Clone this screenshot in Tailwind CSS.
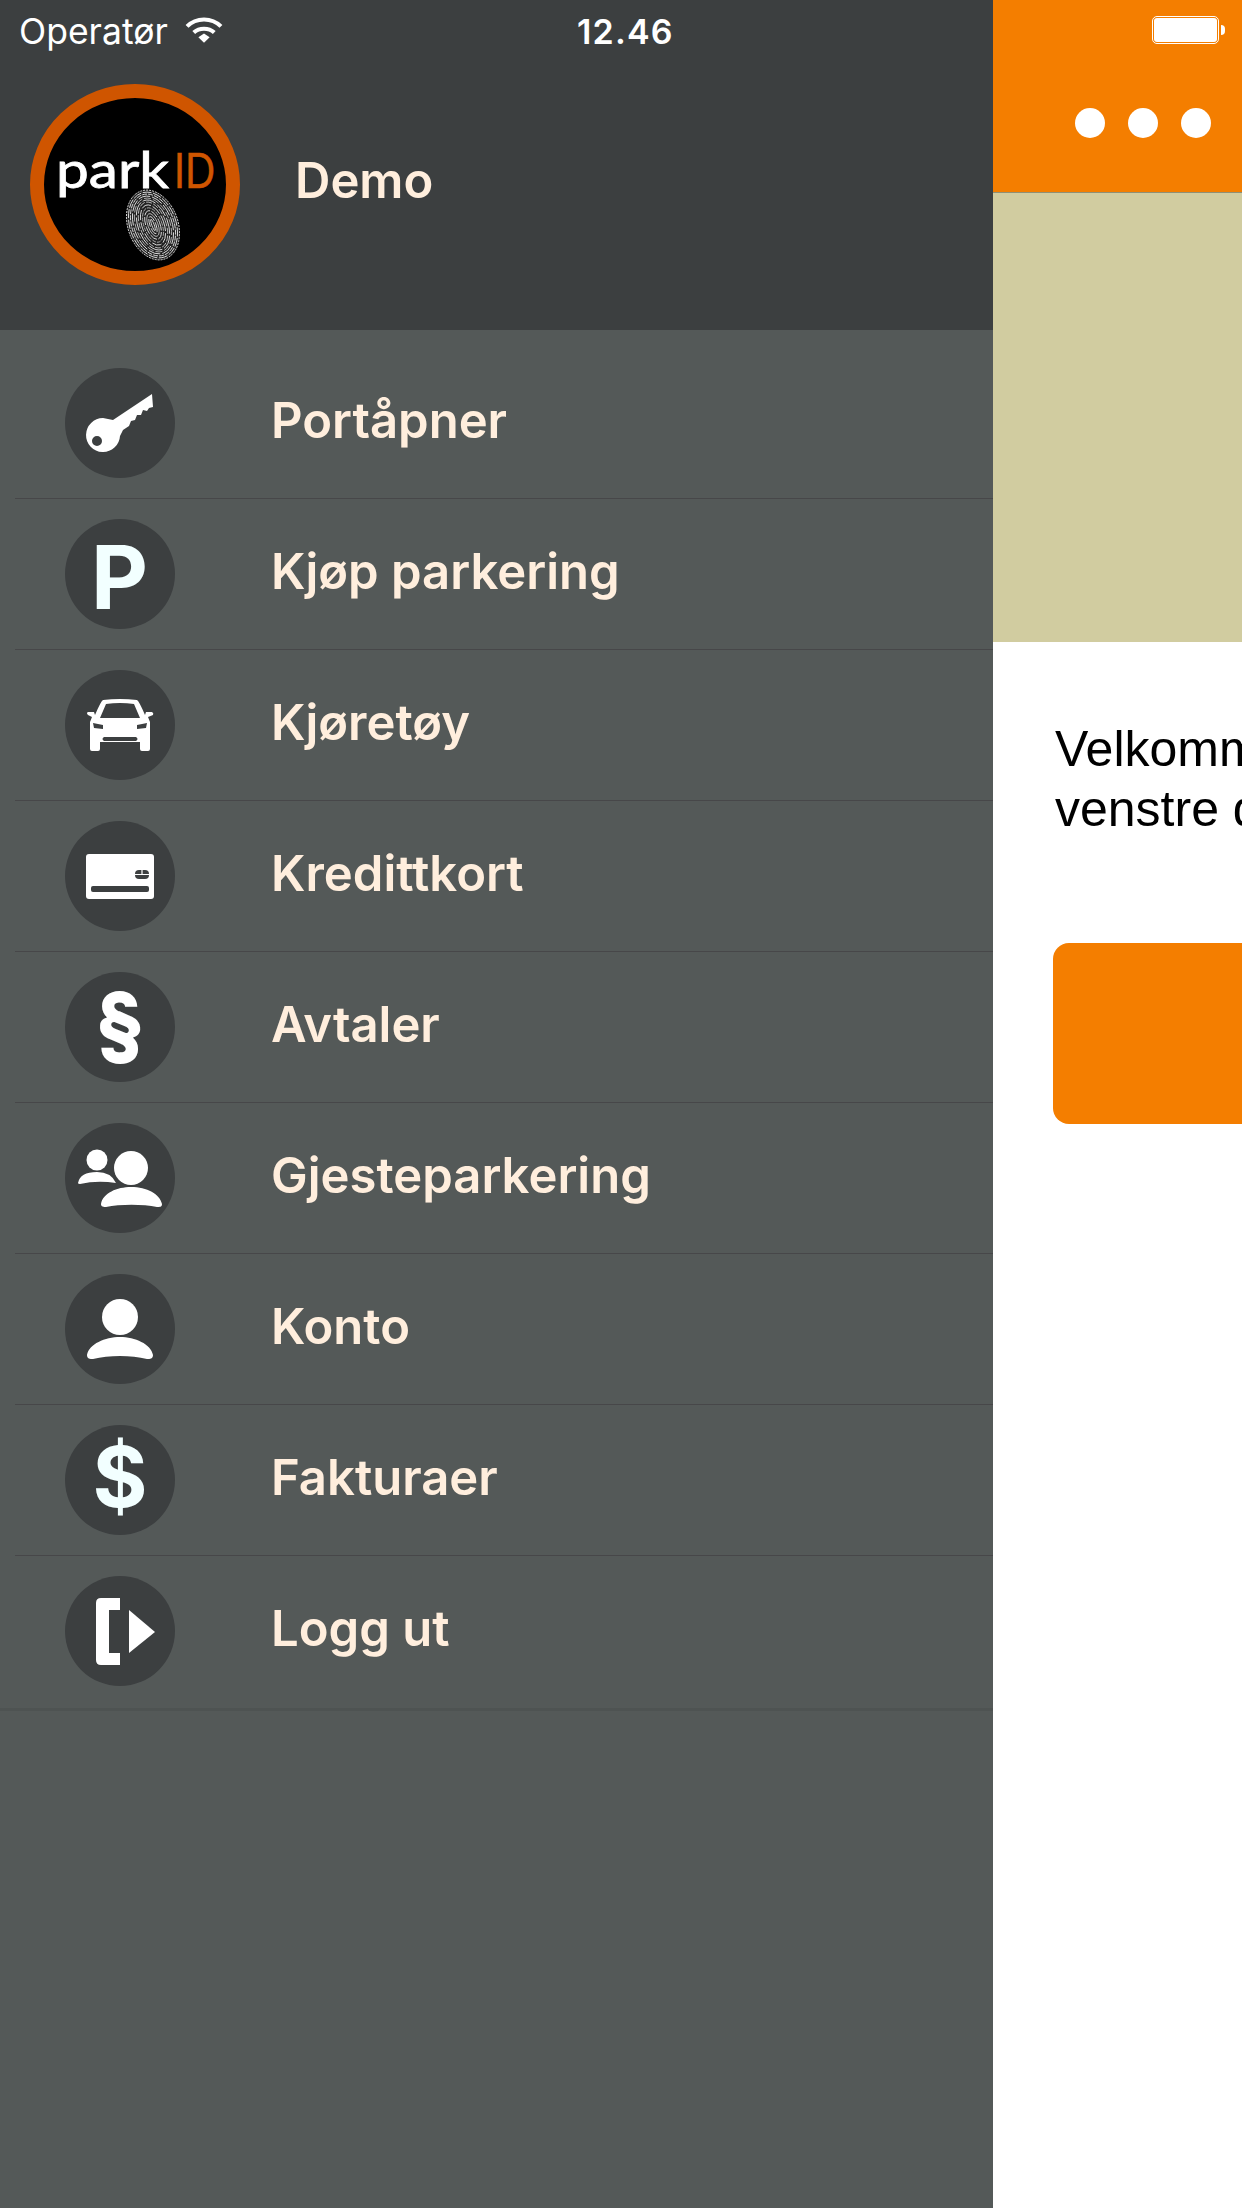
<!DOCTYPE html>
<html lang="no">
<head>
    <meta charset="UTF-8">
    <meta name="viewport" content="width=device-width, initial-scale=1.0">
    <title>parkID - Meny</title>
    <script src="https://cdn.jsdelivr.net/npm/@tailwindcss/browser@4"></script>
</head>
<body class="font-['Inter',sans-serif] bg-white">
<div class="flex w-[1242px] h-[2208px] overflow-hidden">

    <!-- Sidemeny -->
    <aside class="w-[993px] shrink-0 flex flex-col bg-[#545958]">
        <header class="h-[330px] bg-[#3c3f40] flex flex-col">
            <div class="h-[62px] flex items-center pl-[19px] pt-[1px] text-white text-[35.500px]">
                <div class="w-[558px] flex items-center gap-[17px]">
                    <span>Operatør</span>
                    <svg class="w-[38px] h-[28px] -mt-[4px]" viewBox="0 0 37 27">
                        <path d="M2 10 C11 1 26 1 35 10" fill="none" stroke="white" stroke-width="4"/>
                        <path d="M8.5 16 C14 11 23 11 28.500 16" fill="none" stroke="white" stroke-width="4"/>
                        <path d="M13 20.500 L18.500 17 L24 20.500 L18.500 26 Z" fill="white"/>
                    </svg>
                </div>
                <span class="font-semibold text-[34px] tracking-[1.200px]">12.46</span>
            </div>
            <div class="flex items-center pl-[30px] mt-[22px]">
                <svg class="w-[210px] h-[201px]" viewBox="0 0 210 201">
                    <ellipse cx="105" cy="100.500" rx="98" ry="93.500" fill="black" stroke="#cf5500" stroke-width="14"/>
                    <text x="26" y="104" font-family="Lato" font-size="50" fill="white" stroke="white" stroke-width="0.800" textLength="113" lengthAdjust="spacingAndGlyphs">park</text>
                    <text x="144" y="104" font-family="Lato" font-size="48" fill="#cf5500" stroke="#cf5500" stroke-width="0.500" textLength="41" lengthAdjust="spacingAndGlyphs">ID</text>
                    <!-- fingeravtrykk -->
                    <g transform="rotate(-20 123 141)" fill="none" stroke="#f0f0f0" stroke-width="0.800">
                        <ellipse cx="123" cy="141" rx="25" ry="36" fill="#222" stroke-dasharray="2 1"/>
                        <ellipse cx="123" cy="141" rx="23" ry="34" stroke-dasharray="9 1.500"/>
                        <ellipse cx="123" cy="141" rx="21" ry="32" stroke-dasharray="5 1"/>
                        <ellipse cx="123" cy="141" rx="19" ry="30" stroke-dasharray="12 2"/>
                        <ellipse cx="123" cy="141" rx="17" ry="28" stroke="#bbb" stroke-dasharray="7 2"/>
                        <ellipse cx="123" cy="141" rx="15" ry="26" stroke-dasharray="14 2"/>
                        <ellipse cx="123" cy="141" rx="13" ry="24" stroke="#ccc" stroke-dasharray="6 1.500"/>
                        <ellipse cx="123" cy="141" rx="11" ry="21" stroke-dasharray="10 2"/>
                        <ellipse cx="123" cy="141" rx="9" ry="18" stroke="#bbb" stroke-dasharray="4 1"/>
                        <ellipse cx="123" cy="141" rx="7" ry="15" stroke-dasharray="8 1.500"/>
                        <ellipse cx="123" cy="141" rx="5" ry="12" stroke="#ccc"/>
                        <ellipse cx="123" cy="141" rx="3" ry="9" stroke-dasharray="8 1.500"/>
                        <ellipse cx="123" cy="141" rx="1.200" ry="6"/>
                    </g>
                </svg>
                <span class="ml-[55px] -mt-[7px] text-[49px] font-semibold text-[#ffeedd]">Demo</span>
            </div>
        </header>

        <nav class="pt-[18px] text-[49px] font-semibold text-[#ffeedd]">
            <a class="flex items-center h-[151px] ml-[15px] pl-[50px] border-b border-[#474749]">
                <svg class="w-[110px] h-[110px] shrink-0" viewBox="0 0 110 110">
                    <circle cx="55" cy="55" r="55" fill="#3c3f40"/>
                    <path fill="white" fill-rule="evenodd" d="M38 50 A17 17 0 1 0 55 68 L58 62 L61 60 L64 58 L66 53 L70 52 L72 47 L76 47 L78 42 L82 43 L84 40 L88 39 L87 26 L48 52 Z M32 68 A5 5 0 1 1 32 78 A5 5 0 1 1 32 68 Z"/>
                </svg>
                <span class="ml-[96px] -mt-[4px]">Portåpner</span>
            </a>
            <a class="flex items-center h-[151px] ml-[15px] pl-[50px] border-b border-[#474749]">
                <svg class="w-[110px] h-[110px] shrink-0" viewBox="0 0 110 110">
                    <circle cx="55" cy="55" r="55" fill="#3c3f40"/>
                    <text x="26" y="90" font-family="Inter" font-weight="700" font-size="88" fill="#f2ffff">P</text>
                </svg>
                <span class="ml-[96px] -mt-[4px]">Kjøp parkering</span>
            </a>
            <a class="flex items-center h-[151px] ml-[15px] pl-[50px] border-b border-[#474749]">
                <svg class="w-[110px] h-[110px] shrink-0" viewBox="0 0 110 110">
                    <circle cx="55" cy="55" r="55" fill="#3c3f40"/>
                    <path fill="white" d="M38 30 Q55 28 72 30 Q74 31 80 45 L81 42 L87 42 Q89 43 88 45 L83 47 L85 52 L85 79 Q85 81 83 81 L77 81 Q75 81 75 79 L75 72 L35 72 L35 79 Q35 81 33 81 L27 81 Q25 81 25 79 L25 52 L27 47 L23 45 Q21 43 23 42 L29 42 L30 45 Q36 31 38 30 Z"/>
                    <path fill="#3c3f40" d="M41 34 Q55 32 69 34 L75 48 L35 48 Z M28 53 L38 55 L38 59 L29 58 Z M82 53 L72 55 L72 59 L81 58 Z M39 67 L71 67 Q74 69 71 71 L39 71 Q36 69 39 67 Z"/>
                </svg>
                <span class="ml-[96px] -mt-[4px]">Kjøretøy</span>
            </a>
            <a class="flex items-center h-[151px] ml-[15px] pl-[50px] border-b border-[#474749]">
                <svg class="w-[110px] h-[110px] shrink-0" viewBox="0 0 110 110">
                    <circle cx="55" cy="55" r="55" fill="#3c3f40"/>
                    <rect x="21" y="33" width="68" height="45" rx="3" fill="white"/>
                    <rect x="26" y="65" width="58" height="6" rx="2" fill="#3c3f40"/>
                    <rect x="70" y="49" width="14" height="9" rx="4" fill="#3c3f40"/>
                    <path d="M70 53.500 H84 M77 49 V53" stroke="white" stroke-width="1.200"/>
                </svg>
                <span class="ml-[96px] -mt-[4px]">Kredittkort</span>
            </a>
            <a class="flex items-center h-[151px] ml-[15px] pl-[50px] border-b border-[#474749]">
                <svg class="w-[110px] h-[110px] shrink-0" viewBox="0 0 110 110">
                    <circle cx="55" cy="55" r="55" fill="#3c3f40"/>
                    <text x="55" y="80" text-anchor="middle" font-family="Inter" font-weight="800" font-size="82" fill="white">§</text>
                </svg>
                <span class="ml-[96px] -mt-[4px]">Avtaler</span>
            </a>
            <a class="flex items-center h-[151px] ml-[15px] pl-[50px] border-b border-[#474749]">
                <svg class="w-[110px] h-[110px] shrink-0" viewBox="0 0 110 110">
                    <circle cx="55" cy="55" r="55" fill="#3c3f40"/>
                    <circle cx="32" cy="37" r="10.500" fill="white"/>
                    <path fill="white" d="M13 60 Q15 49 32 49 Q46 49 51 60 Q32 57 15 61 Q13 61 13 60 Z"/>
                    <circle cx="66" cy="45" r="17" fill="white"/>
                    <path fill="white" d="M36 81 C38 70 52 64 66 64 C82 64 95 71 97 81 C97 84 95 84 92 84 C78 81 55 81 41 84 C37 84 36 83 36 81 Z"/>
                </svg>
                <span class="ml-[96px] -mt-[4px]">Gjesteparkering</span>
            </a>
            <a class="flex items-center h-[151px] ml-[15px] pl-[50px] border-b border-[#474749]">
                <svg class="w-[110px] h-[110px] shrink-0" viewBox="0 0 110 110">
                    <circle cx="55" cy="55" r="55" fill="#3c3f40"/>
                    <circle cx="55" cy="43" r="18" fill="white"/>
                    <path fill="white" d="M22 81 C24 70 40 63 55 63 C70 63 86 70 88 81 C88 85 85 85 82 85 C66 81 44 81 28 85 C25 85 22 85 22 81 Z"/>
                </svg>
                <span class="ml-[96px] -mt-[4px]">Konto</span>
            </a>
            <a class="flex items-center h-[151px] ml-[15px] pl-[50px] border-b border-[#474749]">
                <svg class="w-[110px] h-[110px] shrink-0" viewBox="0 0 110 110">
                    <circle cx="55" cy="55" r="55" fill="#3c3f40"/>
                    <text x="55" y="82" text-anchor="middle" font-family="Inter" font-weight="700" font-size="84" fill="#f2ffff">$</text>
                </svg>
                <span class="ml-[96px] -mt-[4px]">Fakturaer</span>
            </a>
            <a class="flex items-center h-[150px] pl-[65px]">
                <svg class="w-[110px] h-[110px] shrink-0" viewBox="0 0 110 110">
                    <circle cx="55" cy="55" r="55" fill="#3c3f40"/>
                    <path fill="white" d="M55 22 H36 Q31 22 31 27 V84 Q31 89 36 89 H55 V77 H44 V34 H55 Z"/>
                    <path fill="white" d="M64 34 L90 56 L64 77 Z"/>
                </svg>
                <span class="ml-[96px] -mt-[4px]">Logg ut</span>
            </a>
            <div class="h-[3px] mt-[2px] bg-[#4e5352]"></div>
        </nav>
    </aside>

    <!-- Innhold bak menyen -->
    <main class="flex-1 min-w-0 overflow-hidden flex flex-col">
        <div class="h-[193px] bg-[#f47e00] border-b border-[#8f8f75] shrink-0">
            <div class="flex items-center justify-end pt-[16px] pr-[17px] gap-[2px]">
                <div class="w-[67px] h-[28px] rounded-[5px] border border-white p-px">
                    <div class="w-full h-full rounded-[3px] bg-white"></div>
                </div>
                <div class="w-[4px] h-[10px] rounded-r-full bg-white"></div>
            </div>
            <div class="flex gap-[23px] pl-[82px] pt-[64px]">
                <div class="w-[30px] h-[30px] rounded-full bg-white"></div>
                <div class="w-[30px] h-[30px] rounded-full bg-white"></div>
                <div class="w-[30px] h-[30px] rounded-full bg-white"></div>
            </div>
        </div>
        <div class="h-[449px] bg-[#d1cca0] shrink-0"></div>
        <div class="pl-[62px] pt-[77px] w-[900px]">
            <p class="font-['Liberation_Sans',sans-serif] text-[50px] leading-[60px] text-black whitespace-nowrap">Velkommen til parkID.<br>venstre del</p>
            <div class="mt-[104px] -ml-[2px] h-[181px] w-[700px] rounded-[16px] bg-[#f47e00]"></div>
        </div>
    </main>
</div>
</body>
</html>
